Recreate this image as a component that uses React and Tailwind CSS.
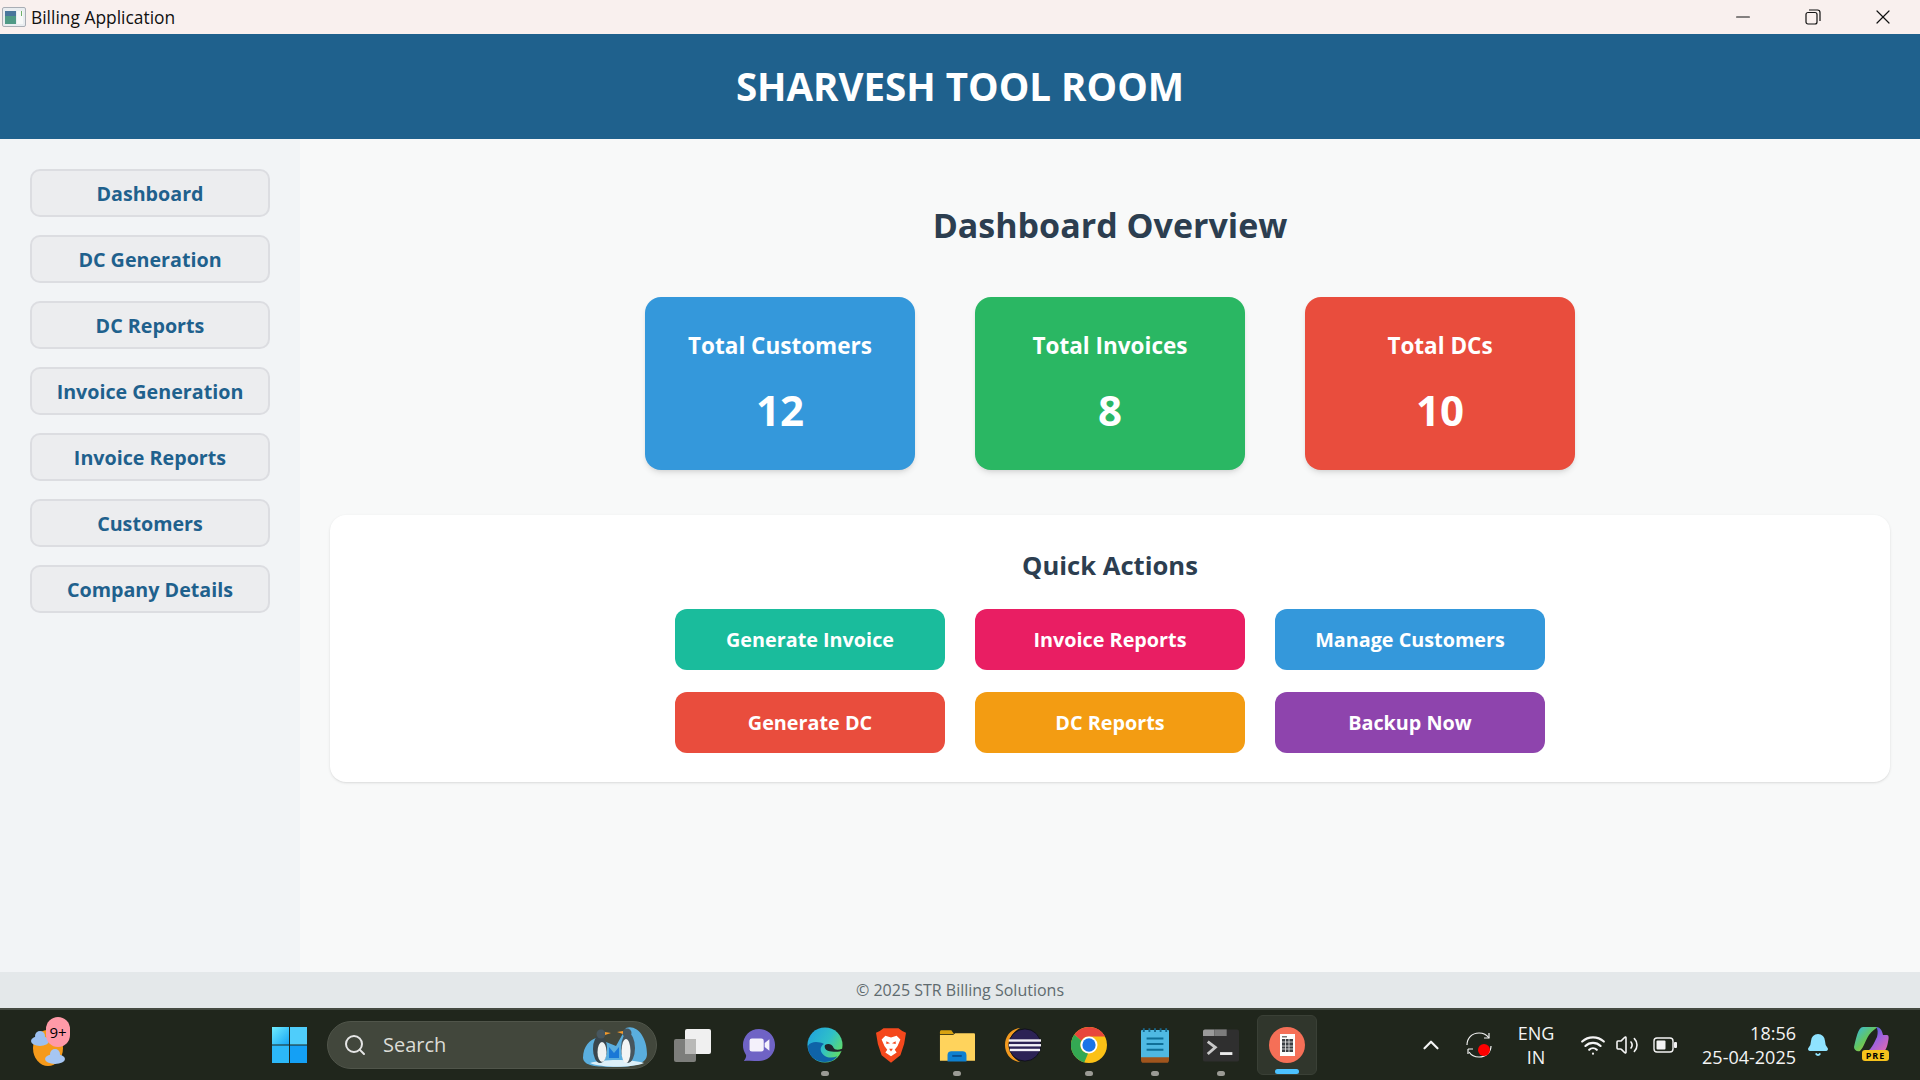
import React from "react";
import { Minus, X, ChevronUp, Search, Wifi, Volume2, Bell } from "lucide-react";

const FONT = "font-['Open_Sans','Noto_Sans',sans-serif]";

const navItems = [
  "Dashboard",
  "DC Generation",
  "DC Reports",
  "Invoice Generation",
  "Invoice Reports",
  "Customers",
  "Company Details",
];

const stats = [
  { label: "Total Customers", value: "12", color: "bg-[#3498db]" },
  { label: "Total Invoices", value: "8", color: "bg-[#2ab763]" },
  { label: "Total DCs", value: "10", color: "bg-[#e94d3d]" },
];

const actions = [
  { label: "Generate Invoice", color: "bg-[#1abc9c]" },
  { label: "Invoice Reports", color: "bg-[#e91e63]" },
  { label: "Manage Customers", color: "bg-[#3498db]" },
  { label: "Generate DC", color: "bg-[#e94d3d]" },
  { label: "DC Reports", color: "bg-[#f39c12]" },
  { label: "Backup Now", color: "bg-[#8e44ad]" },
];

const AppIcon = () => (
  <svg width="24" height="20" viewBox="0 0 24 20">
    <rect x="0.5" y="0.5" width="23" height="19" rx="1.5" fill="#e9edf0" stroke="#a9aeb5" />
    <rect x="3" y="4" width="11" height="13" fill="#4f9a86" />
    <rect x="3" y="4" width="11" height="5" fill="#49769c" />
    <rect x="15" y="4" width="6" height="13" fill="#f7f9f8" />
    <rect x="19" y="4" width="1" height="5" fill="#6fb06a" />
  </svg>
);

const Weather = () => (
  <div className="relative w-[42px] h-[44px]">
    <svg width="42" height="44" viewBox="0 0 42 44" className="absolute left-0 top-0">
      <ellipse cx="18" cy="25" rx="15" ry="18" fill="#f59a1b" />
      <ellipse cx="10" cy="18" rx="9" ry="5" fill="#9cc0f0" />
      <circle cx="10" cy="13" r="5" fill="#9cc0f0" />
      <ellipse cx="25" cy="36" rx="10" ry="5" fill="#a6c6f3" />
      <circle cx="25" cy="31" r="5" fill="#a6c6f3" />
    </svg>
    <div className="absolute left-[16px] top-[-6px] w-[24px] h-[30px] rounded-full bg-[#ff9aa8] flex items-center justify-center text-[15px] text-black">
      9+
    </div>
  </div>
);

const WinLogo = () => (
  <svg width="35" height="36" viewBox="0 0 35 36">
    <defs>
      <linearGradient id="winA" x1="0" y1="0" x2="1" y2="1">
        <stop offset="0" stopColor="#6fecff" />
        <stop offset="1" stopColor="#17a6f5" />
      </linearGradient>
    </defs>
    <rect x="0" y="0" width="17" height="17.5" fill="url(#winA)" />
    <rect x="18" y="0" width="17" height="17.5" fill="#4fcdfb" />
    <rect x="0" y="18.5" width="17" height="17.5" fill="#2cb8f8" />
    <rect x="18" y="18.5" width="17" height="17.5" fill="#14a0f5" />
  </svg>
);

const Penguins = () => (
  <svg width="66" height="46" viewBox="0 0 66 46">
    <path d="M1 36C1 24 8 18 14 16L34 24L44 6C54 2 65 14 65 32C65 42 52 45 32 45C14 45 2 44 1 36Z" fill="#5aaede" />
    <path d="M8 41C20 37 50 37 62 41C50 46 20 46 8 41Z" fill="#dceff8" />
    <ellipse cx="18" cy="27" rx="7" ry="14" fill="#39464e" />
    <ellipse cx="20" cy="30" rx="4.5" ry="10" fill="#eef2f2" />
    <circle cx="19" cy="12" r="4.5" fill="#47565e" />
    <path d="M23 10L29 11L23 13Z" fill="#f49a2c" />
    <ellipse cx="46" cy="26" rx="7" ry="15" fill="#47565e" />
    <ellipse cx="44" cy="29" rx="4.5" ry="12" fill="#f3f5f5" />
    <circle cx="45" cy="11" r="4.5" fill="#47565e" />
    <path d="M41 9L35 10L41 12Z" fill="#f49a2c" />
    <path d="M27 36V25L32 31L37 25V36Z" fill="#1a78d6" />
  </svg>
);

const TaskView = () => (
  <svg width="38" height="36" viewBox="0 0 38 36">
    <rect x="11" y="2" width="26" height="25" rx="2" fill="#f0f0f0" />
    <rect x="0" y="12" width="22" height="23" rx="2" fill="#8e8e8c" fillOpacity="0.85" />
    <rect x="11" y="12" width="11" height="15" fill="#b9b9b7" />
  </svg>
);

const Meet = () => (
  <svg width="34" height="36" viewBox="0 0 36 36">
    <path d="M18 1C28 1 35 9 35 18C35 28 27 35 18 35C13 35 8 34 2 35C4 32 5 30 4 28C2 25 1 22 1 18C1 9 8 1 18 1Z" fill="#6f63c5" />
    <rect x="8" y="11" width="15" height="14" rx="2.5" fill="#f4f1fb" />
    <path d="M24 16L29 12V24L24 20Z" fill="#f4f1fb" />
  </svg>
);

const Edge = () => (
  <svg width="36" height="36" viewBox="0 0 38 38">
    <defs>
      <linearGradient id="edgeA" x1="0" y1="0" x2="1" y2="0.6">
        <stop offset="0" stopColor="#1f9fe0" />
        <stop offset="0.6" stopColor="#2fc0c8" />
        <stop offset="1" stopColor="#5fdc6c" />
      </linearGradient>
    </defs>
    <circle cx="19" cy="19" r="18.5" fill="url(#edgeA)" />
    <path d="M1 20C1 31 10 37 19 37C26 37 30 34 32 31C27 33 21 33 17 29C13 25 14 20 18 18C12 15 4 15 1 20Z" fill="#0f63a8" />
    <path d="M19 19C22 17 27 18 28 22C29 24 32 25 37 23L37 25C33 27 26 26 22 25C19 24 18 21 19 19Z" fill="#20262a" />
  </svg>
);

const Brave = () => (
  <svg width="30" height="36" viewBox="0 0 32 38">
    <path d="M8 1H24L28 4L32 6L30 18L26 30L16 38L6 30L2 18L0 6L4 4Z" fill="#f4481d" />
    <path d="M10 9L16 11L22 9L26 13L23 20L20 24L22 27L16 31L10 27L12 24L9 20L6 13Z" fill="#ffffff" />
    <path d="M11 15L15 17L11 18ZM21 15L17 17L21 18ZM14 23H18L16 26Z" fill="#f4481d" />
  </svg>
);

const Folder = () => (
  <svg width="36" height="33" viewBox="0 0 38 34">
    <path d="M1 3C1 1 2 1 3 1H13L16 5H1Z" fill="#d9a20f" />
    <path d="M1 6L15 6L17 4H37C38 4 38 5 38 6V33H1Z" fill="#ffd35c" />
    <path d="M9 34V27C9 24 11 23 13 23H25C27 23 29 24 29 27V34Z" fill="#0f80d0" />
    <rect x="14" y="27" width="10" height="2" fill="#0a4f8f" />
  </svg>
);

const Eclipse = () => (
  <svg width="36" height="36" viewBox="0 0 38 38">
    <path d="M16 1C6 2 0 10 0 19C0 28 6 36 16 37C8 33 5 26 5 19C5 12 8 5 16 1Z" fill="#f39a1f" />
    <circle cx="21" cy="19" r="17" fill="#2c2255" stroke="#10101a" />
    <rect x="4" y="13" width="34" height="2.5" fill="#f3f1f7" />
    <rect x="4" y="18" width="34" height="2.5" fill="#f3f1f7" />
    <rect x="5" y="23" width="32" height="2.5" fill="#f3f1f7" />
  </svg>
);

const Chrome = () => (
  <svg width="36" height="36" viewBox="0 0 38 38">
    <circle cx="19" cy="19" r="19" fill="#fbc116" />
    <path d="M19 0A19 19 0 0 1 36 10H19A9 9 0 0 0 11 14.5L3.5 8A19 19 0 0 1 19 0Z" fill="#e8453c" />
    <path d="M3.5 8L11 14.5A9 9 0 0 0 18 28L14 37.5A19 19 0 0 1 3.5 8Z" fill="#34a853" />
    <circle cx="19" cy="19" r="9" fill="#ffffff" />
    <circle cx="19" cy="19" r="7" fill="#1a73e8" />
  </svg>
);

const Notepad = () => (
  <svg width="28" height="36" viewBox="0 0 30 38">
    <rect x="0" y="3" width="30" height="31" rx="1" fill="#4fb9e3" />
    <path d="M0 32H30V35C30 37 29 38 28 38H2C1 38 0 37 0 35Z" fill="#a0551d" />
    <path d="M3 1V5M9 1V5M15 1V5M21 1V5M27 1V5" stroke="#176a90" strokeWidth="2" />
    <path d="M6 12H24M6 18H24M6 24H24" stroke="#0f6f98" strokeWidth="2.2" />
  </svg>
);

const Terminal = () => (
  <svg width="36" height="33" viewBox="0 0 38 34">
    <rect x="0" y="0" width="38" height="34" rx="2" fill="#2f2f2f" />
    <path d="M0 2C0 1 1 0 2 0H12V7H0Z" fill="#9a9a9a" />
    <rect x="12" y="0" width="13" height="7" fill="#7c7c7c" />
    <path d="M5 13L13 19L5 26" stroke="#c8c8c8" strokeWidth="3" fill="none" />
    <rect x="18" y="24" width="13" height="3" fill="#ececec" />
  </svg>
);

const Billing = () => (
  <svg width="36" height="36" viewBox="0 0 36 36">
    <ellipse cx="18" cy="18" rx="18" ry="18" fill="#f56f57" />
    <rect x="11" y="7" width="15" height="22" fill="#fdfdfd" />
    <rect x="13" y="12" width="11" height="13" fill="#3b3f44" />
    <path d="M13 15H24M13 19H24M13 22H24M16.5 12V25M20 12V25" stroke="#e8e8e8" strokeWidth="0.8" />
    <rect x="13" y="9" width="5" height="1.5" fill="#777" />
  </svg>
);

const SyncRecord = () => (
  <div className="relative w-[26px] h-[26px]">
    <svg width="26" height="26" viewBox="0 0 26 26" fill="none" stroke="#f2f2f2" strokeWidth="1.2">
      <path d="M1 13C1 6 6 1 13 1C18 1 21 3 23 6" />
      <path d="M23 1V6H18" />
      <path d="M25 14C25 20 20 25 13 25C8 25 5 23 3 20" />
      <path d="M2 17H7M2 17V22" />
    </svg>
    <span className="absolute left-[12px] top-[12px] w-[12px] h-[12px] rounded-full bg-[#ff0000]" />
  </div>
);

const Battery = () => (
  <svg width="24" height="16" viewBox="0 0 24 16" fill="none">
    <rect x="1" y="1" width="19" height="14" rx="3" stroke="#f4f4f4" strokeWidth="1.4" />
    <rect x="3.5" y="3.5" width="9" height="9" rx="1" fill="#f4f4f4" />
    <rect x="21" y="5" width="3" height="6" rx="1" fill="#f4f4f4" />
  </svg>
);

const Copilot = () => (
  <div className="relative w-[36px] h-[36px]">
    <svg width="36" height="30" viewBox="0 0 36 30">
      <defs>
        <linearGradient id="copA" x1="0" y1="0" x2="1" y2="1">
          <stop offset="0" stopColor="#35b8e8" />
          <stop offset="0.5" stopColor="#66c65a" />
          <stop offset="1" stopColor="#f2c230" />
        </linearGradient>
        <linearGradient id="copB" x1="0" y1="0" x2="1" y2="1">
          <stop offset="0" stopColor="#0f5ed0" />
          <stop offset="0.5" stopColor="#9a62e0" />
          <stop offset="1" stopColor="#f06aa8" />
        </linearGradient>
      </defs>
      <path d="M9 0H24C21 2 18 4 15 8C12 12 10 20 6 24C3 25 0 23 0 20C2 12 4 0 9 0Z" fill="url(#copA)" />
      <path d="M22 0C26 0 28 3 29 8H33C35 8 35 11 34 15C33 21 31 26 26 26H10C17 24 20 16 23 10C24 6 24 2 22 0Z" fill="url(#copB)" />
    </svg>
    <span className="absolute left-[8px] top-[23px] w-[27px] h-[11px] rounded-[3px] bg-[#f6c21c] text-[9px] leading-[11px] font-bold text-black text-center tracking-[1px]">
      PRE
    </span>
  </div>
);

const taskIcons = [
  { el: <TaskView />, dot: false },
  { el: <Meet />, dot: false },
  { el: <Edge />, dot: true },
  { el: <Brave />, dot: false },
  { el: <Folder />, dot: true },
  { el: <Eclipse />, dot: false },
  { el: <Chrome />, dot: true },
  { el: <Notepad />, dot: true },
  { el: <Terminal />, dot: true },
];

const Taskbar = () => (
  <div className="h-[72px] shrink-0 bg-[#20261c] border-t-2 border-[#454a42] flex items-center text-white">
    <div className="ml-[30px] w-[242px] shrink-0">
      <Weather />
    </div>
    <WinLogo />
    <div className="ml-[20px] w-[330px] h-[48px] shrink-0 rounded-full bg-[#42473c] border border-[#50554a] flex items-center pl-[15px] pr-[8px]">
      <Search size={24} strokeWidth={2} className="text-[#e6e6e6]" />
      <span className="ml-[16px] flex-1 text-[20px] text-[#dcdcd6]">Search</span>
      <Penguins />
    </div>
    <div className="ml-[3px] flex">
      {taskIcons.map((t, i) => (
        <div key={i} className="relative w-[66px] h-[60px] flex items-center justify-center">
          {t.el}
          {t.dot && (
            <span className="absolute left-[29px] bottom-[-1px] w-[8px] h-[5px] rounded-full bg-[#9b9b95]" />
          )}
        </div>
      ))}
      <div className="relative w-[60px] h-[60px] mx-[3px] rounded-[6px] bg-[#30362c] border border-[#3a4036] flex items-center justify-center">
        <Billing />
        <span className="absolute left-[17px] bottom-[0px] w-[24px] h-[5px] rounded-full bg-[#4cc2ff]" />
      </div>
    </div>
    <div className="ml-[98px] flex items-center">
      <ChevronUp size={26} strokeWidth={2} className="text-[#f4f4f4]" />
      <div className="ml-[22px]">
        <SyncRecord />
      </div>
      <div className="ml-[14px] w-[60px] text-center text-[18px] leading-[24px] text-[#f4f4f4]">
        <div>ENG</div>
        <div>IN</div>
      </div>
      <Wifi size={26} strokeWidth={2} className="ml-[14px] text-[#f4f4f4]" />
      <Volume2 size={24} strokeWidth={1.6} className="ml-[9px] text-[#f4f4f4]" />
      <div className="ml-[14px]">
        <Battery />
      </div>
      <div className="ml-[14px] w-[105px] text-right text-[18px] leading-[24px] text-[#f4f4f4]">
        <div>18:56</div>
        <div>25-04-2025</div>
      </div>
      <Bell size={24} fill="#8fe3ff" stroke="#8fe3ff" className="ml-[10px]" />
      <div className="ml-[24px]">
        <Copilot />
      </div>
    </div>
  </div>
);

export default function App() {
  return (
    <div className={`w-[1920px] h-[1080px] overflow-hidden flex flex-col ${FONT}`}>
      {/* Window title bar */}
      <div className="h-[34px] shrink-0 bg-[#f9f0ee] flex items-center">
        <div className="ml-[2px]">
          <AppIcon />
        </div>
        <span className="ml-[5px] text-[17.4px] text-[#111]">Billing Application</span>
        <div className="ml-auto mr-[2px] flex items-center">
          <div className="w-[70px] flex justify-center">
            <Minus size={22} strokeWidth={1.2} className="text-[#111]" />
          </div>
          <div className="w-[70px] flex justify-center">
            <svg width="16" height="16" viewBox="0 0 16 16" fill="none" stroke="#111" strokeWidth="1.2">
              <rect x="1" y="3.5" width="11" height="11.5" rx="2" />
              <path d="M4 1H12.5C14 1 15 2 15 3.5V12" />
            </svg>
          </div>
          <div className="w-[70px] flex justify-center">
            <X size={24} strokeWidth={1.2} className="text-[#111]" />
          </div>
        </div>
      </div>

      {/* Header */}
      <div className="h-[105px] shrink-0 bg-[#1f618d] flex items-center justify-center">
        <h1 className="text-[38.5px] font-bold text-white">SHARVESH TOOL ROOM</h1>
      </div>

      <div className="flex-1 flex min-h-0">
        {/* Sidebar */}
        <div className="w-[300px] shrink-0 bg-[#f2f4f6] px-[30px] pt-[30px] flex flex-col gap-[18px]">
          {navItems.map((item) => (
            <button
              key={item}
              className="h-[48px] pt-[2px] rounded-[10px] bg-[#ecedef] border-2 border-[#dcdde1] text-[19.7px] font-bold text-[#1f618d]"
            >
              {item}
            </button>
          ))}
        </div>

        {/* Main content */}
        <div className="flex-1 bg-[#f8f9f9] pl-[30px] pr-[30px] flex flex-col items-center">
          <h2 className="mt-[60px] h-[52px] leading-[52px] text-[34px] font-bold text-[#2c3e50]">
            Dashboard Overview
          </h2>
          <div className="mt-[46px] flex gap-[60px]">
            {stats.map((s) => (
              <div
                key={s.label}
                className={`w-[270px] h-[173px] rounded-[16px] ${s.color} shadow-md text-white flex flex-col items-center`}
              >
                <div className="mt-[31px] h-[36px] leading-[36px] text-[22.5px] font-bold">{s.label}</div>
                <div className="mt-[17px] h-[58px] leading-[58px] text-[42px] font-bold">{s.value}</div>
              </div>
            ))}
          </div>

          <div className="mt-[45px] w-full h-[267px] rounded-[16px] bg-white shadow-sm flex flex-col items-center">
            <h3 className="mt-[32px] h-[38px] leading-[38px] text-[25.6px] font-bold text-[#2c3e50]">
              Quick Actions
            </h3>
            <div className="mt-[24px] grid grid-cols-3 gap-x-[30px] gap-y-[22px]">
              {actions.map((a) => (
                <button
                  key={a.label}
                  className={`w-[270px] h-[61px] rounded-[12px] ${a.color} text-[19.8px] font-bold text-white`}
                >
                  {a.label}
                </button>
              ))}
            </div>
          </div>
        </div>
      </div>

      {/* Footer */}
      <div className="h-[36px] shrink-0 bg-[#e4e8ea] flex items-center justify-center text-[16px] text-[#5f6b6f]">
        © 2025 STR Billing Solutions
      </div>

      <Taskbar />
    </div>
  );
}
